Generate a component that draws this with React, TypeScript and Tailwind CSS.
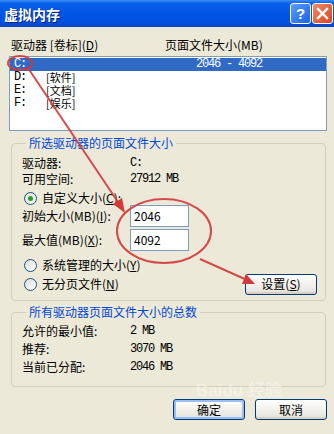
import React from "react";

const cjk = { fontFamily: '"Noto Sans CJK SC", "Noto Sans", sans-serif' };
const mono = { fontFamily: '"Liberation Mono", "Noto Sans CJK SC", monospace' };

function Radio({ checked }: { checked?: boolean }) {
  return (
    <span className="w-[13px] h-[13px] rounded-full border border-[#1c5180] bg-gradient-to-br from-[#dcdcd7] to-white flex items-center justify-center shrink-0">
      {checked && <span className="w-[5px] h-[5px] rounded-full bg-[#21a121]" />}
    </span>
  );
}

function U({ c }: { c: string }) {
  return <span className="underline underline-offset-1">{c}</span>;
}

function XpButton({ children, def, className }: { children: React.ReactNode; def?: boolean; className?: string }) {
  return (
    <div
      className={
        "h-[21px] rounded-[3px] border border-[#003c74] bg-gradient-to-b from-white to-[#e3e2da] flex items-center justify-center text-[12px] leading-none text-black " +
        (def ? "shadow-[inset_0_0_0_2px_#9cbdf2] " : "shadow-[inset_0_-2px_0_#d6d0c5] ") +
        (className ?? "")
      }
    >
      {children}
    </div>
  );
}

export default function App() {
  return (
    <div className="relative w-[334px] h-[434px] bg-[#ece9d8] overflow-hidden text-black" style={cjk}>
      {/* Title bar */}
      <div className="h-[27px] flex items-center justify-between pl-[4px] pr-[1px] bg-[linear-gradient(to_bottom,#3c8ef8_0%,#0a5fe8_12%,#0055e5_50%,#0050de_85%,#0842c4_100%)]">
        <span className="text-white font-bold text-[14px] leading-none [text-shadow:1px_1px_0_#0a1e6e]">虚拟内存</span>
        <div className="flex gap-[1px] items-center">
          <div className="w-[21px] h-[21px] rounded-[3px] border border-white bg-[linear-gradient(135deg,#5a9cff,#1b62e6)] flex items-center justify-center text-white font-bold text-[15px] leading-none" style={{ fontFamily: '"Liberation Sans", sans-serif' }}>
            ?
          </div>
          <div className="w-[21px] h-[21px] rounded-[3px] border border-white bg-[linear-gradient(135deg,#f08a6a,#d8461e)] flex items-center justify-center">
            <svg width="13" height="13" viewBox="0 0 13 13">
              <path d="M2 2 L11 11 M11 2 L2 11" stroke="white" strokeWidth="2.4" strokeLinecap="square" />
            </svg>
          </div>
        </div>
      </div>

      <div className="flex flex-col pl-[9px] pr-[7px] border-l-[2px] border-[#dfe7f4] -ml-[2px]">
        {/* Headers */}
        <div className="flex h-[14px] mt-[11px] items-center text-[12px] leading-none">
          <span className="w-[156px] pl-[2px]">
            驱动器 [卷标](<U c="D" />)
          </span>
          <span>页面文件大小(MB)</span>
        </div>

        {/* List box */}
        <div className="mt-[4px] h-[75px] border border-[#7f9db9] bg-white flex flex-col pt-[1px] text-[12px] leading-[12px] tracking-[-1.2px]" style={mono}>
          <div className="h-[12.5px] bg-[#316ac5] text-white flex items-center">
            <span className="w-[186px] pl-[4px]">C:</span>
            <span>2046 - 4092</span>
          </div>
          {[
            ["D:", "[软件]"],
            ["E:", "[文档]"],
            ["F:", "[娱乐]"],
          ].map(([d, l]) => (
            <div key={d} className="h-[13px] flex items-center">
              <span className="w-[36px] pl-[4px]">{d}</span>
              <span className="text-[11px] leading-[11px] tracking-normal" style={cjk}>{l}</span>
            </div>
          ))}
        </div>

        {/* Group 1 */}
        <fieldset className="mt-[5px] ml-[2px] mr-[1px] border border-[#d0d0bf] rounded-[4px] pl-[10px] pr-[8px] pt-[5px] pb-[6px] text-[12px]">
          <legend className="ml-[4px] px-[3px] text-[#0046d5] leading-[14px]">所选驱动器的页面文件大小</legend>
          <div className="flex h-[16px] items-center">
            <span className="w-[108px]">驱动器:</span>
            <span className="text-[12px] tracking-[-1.2px]" style={mono}>C:</span>
          </div>
          <div className="flex h-[16px] items-center">
            <span className="w-[108px]">可用空间:</span>
            <span className="text-[12px] tracking-[-1.2px]" style={mono}>27912 MB</span>
          </div>
          <div className="flex h-[16px] items-center mt-[3px] pl-[2px] gap-[5px]">
            <Radio checked />
            <span>自定义大小(<U c="C" />):</span>
          </div>
          <div className="flex h-[22px] items-center mt-[-1px]">
            <span className="w-[108px]">初始大小(MB)(<U c="I" />):</span>
            <div className="w-[59px] h-[22px] border border-[#7f9db9] bg-white pl-[3px] flex items-center text-[12px]">2046</div>
          </div>
          <div className="flex h-[22px] items-center mt-[2px]">
            <span className="w-[108px]">最大值(MB)(<U c="X" />):</span>
            <div className="w-[59px] h-[22px] border border-[#7f9db9] bg-white pl-[3px] flex items-center text-[12px]">4092</div>
          </div>
          <div className="flex h-[16px] items-center mt-[6px] pl-[2px] gap-[5px]">
            <Radio />
            <span>系统管理的大小(<U c="Y" />)</span>
          </div>
          <div className="flex h-[20px] items-center mt-[1px] pl-[2px] gap-[5px]">
            <Radio />
            <span className="flex-1">无分页文件(<U c="N" />)</span>
            <XpButton className="w-[72px] h-[21px]">
              设置(<U c="S" />)
            </XpButton>
          </div>
        </fieldset>

        {/* Group 2 */}
        <fieldset className="mt-[4px] ml-[2px] mr-[1px] border border-[#d0d0bf] rounded-[4px] pl-[10px] pr-[8px] pt-[3px] pb-[10px] text-[12px]">
          <legend className="ml-[4px] px-[3px] text-[#0046d5] leading-[14px]">所有驱动器页面文件大小的总数</legend>
          {[
            ["允许的最小值:", "2 MB"],
            ["推荐:", "3070 MB"],
            ["当前已分配:", "2046 MB"],
          ].map(([a, b]) => (
            <div key={a} className="flex h-[18px] items-center">
              <span className="w-[108px]">{a}</span>
              <span className="text-[12px] tracking-[-1.2px]" style={mono}>{b}</span>
            </div>
          ))}
        </fieldset>

        {/* Bottom buttons */}
        <div className="flex justify-end gap-[10px] mt-[12px]">
          <XpButton def className="w-[72px]">确定</XpButton>
          <XpButton className="w-[72px]">取消</XpButton>
        </div>
      </div>

      {/* Watermark */}
      <div className="absolute left-[196px] top-[382px] text-white/40 text-[17px] font-bold leading-none pointer-events-none" style={{ fontFamily: '"Liberation Sans", "Noto Sans CJK SC", sans-serif' }}>
        Baidu 经验
      </div>

      {/* Red annotations */}
      <svg className="absolute inset-0 pointer-events-none" width="334" height="434" viewBox="0 0 334 434">
        <g stroke="#d23a3a" strokeWidth="2" fill="none" opacity="0.9">
          <ellipse cx="20" cy="63" rx="12" ry="7" />
          <line x1="28" y1="68" x2="120" y2="205" />
          <ellipse cx="164" cy="231" rx="47" ry="32" />
          <line x1="200" y1="259" x2="247" y2="280" />
        </g>
        <polygon points="125,213 113,204 122,198" fill="#d23a3a" />
        <polygon points="255,284 242,284 246,274" fill="#d23a3a" />
      </svg>
    </div>
  );
}
